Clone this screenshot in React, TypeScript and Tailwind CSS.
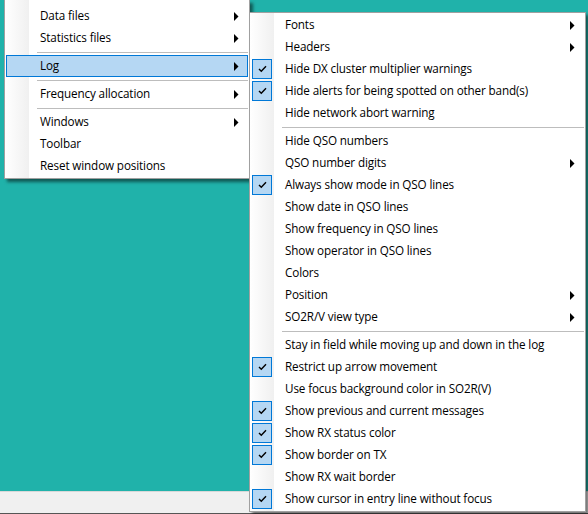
type Item = {
  label?: string;
  arrow?: boolean;
  checked?: boolean;
  active?: boolean;
  sep?: boolean;
};

const leftItems: Item[] = [
  { label: "Data files", arrow: true },
  { label: "Statistics files", arrow: true },
  { sep: true },
  { label: "Log", arrow: true, active: true },
  { sep: true },
  { label: "Frequency allocation", arrow: true },
  { sep: true },
  { label: "Windows", arrow: true },
  { label: "Toolbar" },
  { label: "Reset window positions" },
];

const logItems: Item[] = [
  { label: "Fonts", arrow: true },
  { label: "Headers", arrow: true },
  { label: "Hide DX cluster multiplier warnings", checked: true },
  { label: "Hide alerts for being spotted on other band(s)", checked: true },
  { label: "Hide network abort warning" },
  { sep: true },
  { label: "Hide QSO numbers" },
  { label: "QSO number digits", arrow: true },
  { label: "Always show mode in QSO lines", checked: true },
  { label: "Show date in QSO lines" },
  { label: "Show frequency in QSO lines" },
  { label: "Show operator in QSO lines" },
  { label: "Colors" },
  { label: "Position", arrow: true },
  { label: "SO2R/V view type", arrow: true },
  { sep: true },
  { label: "Stay in field while moving up and down in the log" },
  { label: "Restrict up arrow movement", checked: true },
  { label: "Use focus background color in SO2R(V)" },
  { label: "Show previous and current messages", checked: true },
  { label: "Show RX status color", checked: true },
  { label: "Show border on TX", checked: true },
  { label: "Show RX wait border" },
  { label: "Show cursor in entry line without focus", checked: true },
];

function Row({ item }: { item: Item }) {
  if (item.sep) {
    return (
      <div className="h-[6px] pl-[31px] flex items-center">
        <div className="h-[1px] w-full bg-[#bdbdbd]" />
      </div>
    );
  }
  return (
    <div
      className={
        "h-[22px] flex items-center whitespace-nowrap " +
        (item.active ? "bg-[#b5d7f3] outline outline-1 -outline-offset-1 outline-[#0078d7]" : "")
      }
    >
      <div className="w-[24px] pl-[1px] shrink-0">
        {item.checked && (
          <div className="w-[20px] h-[20px] bg-[#b5d7f3] border border-[#0078d7] flex items-center justify-center">
            <svg width="9" height="8" viewBox="0 0 9 8">
              <path d="M1 4L3.3 6.3L8 1.3" fill="none" stroke="#000" strokeWidth="1.4" />
            </svg>
          </div>
        )}
      </div>
      <div className="flex-1 pl-[10px] pb-[1px]">{item.label}</div>
      {item.arrow && (
        <svg width="5" height="9" viewBox="0 0 5 9" className="mr-[9px]">
          <path d="M0 0L4.5 4.5L0 9Z" fill="#000" />
        </svg>
      )}
    </div>
  );
}

function Menu({ items, className }: { items: Item[]; className: string }) {
  return (
    <div
      className={
        "absolute border border-[#a0a0a0] p-[1px] shadow-[3px_3px_3px_rgba(0,0,0,0.5)] bg-[linear-gradient(to_right,#ffffff,#f0f0f0_24px,#ffffff_24px)] " +
        className
      }
    >
      {items.map((item, i) => (
        <Row key={i} item={item} />
      ))}
    </div>
  );
}

export default function App() {
  return (
    <div className="relative w-[588px] h-[514px] overflow-hidden flex flex-col bg-[#20b2aa] font-['Open_Sans','Noto_Sans',sans-serif] text-[11.7px] tracking-[-0.13px] text-black">
      <div className="flex-1" />
      <div className="h-[23px] bg-[#f0f0f0] border-t border-[#d8d8d8] border-b border-b-[#555]" />
      <Menu items={leftItems} className="left-[4px] top-0 w-[246px] border-t-0 pt-[5px]" />
      <Menu items={logItems} className="left-[249px] top-[12px] w-[337px]" />
    </div>
  );
}
